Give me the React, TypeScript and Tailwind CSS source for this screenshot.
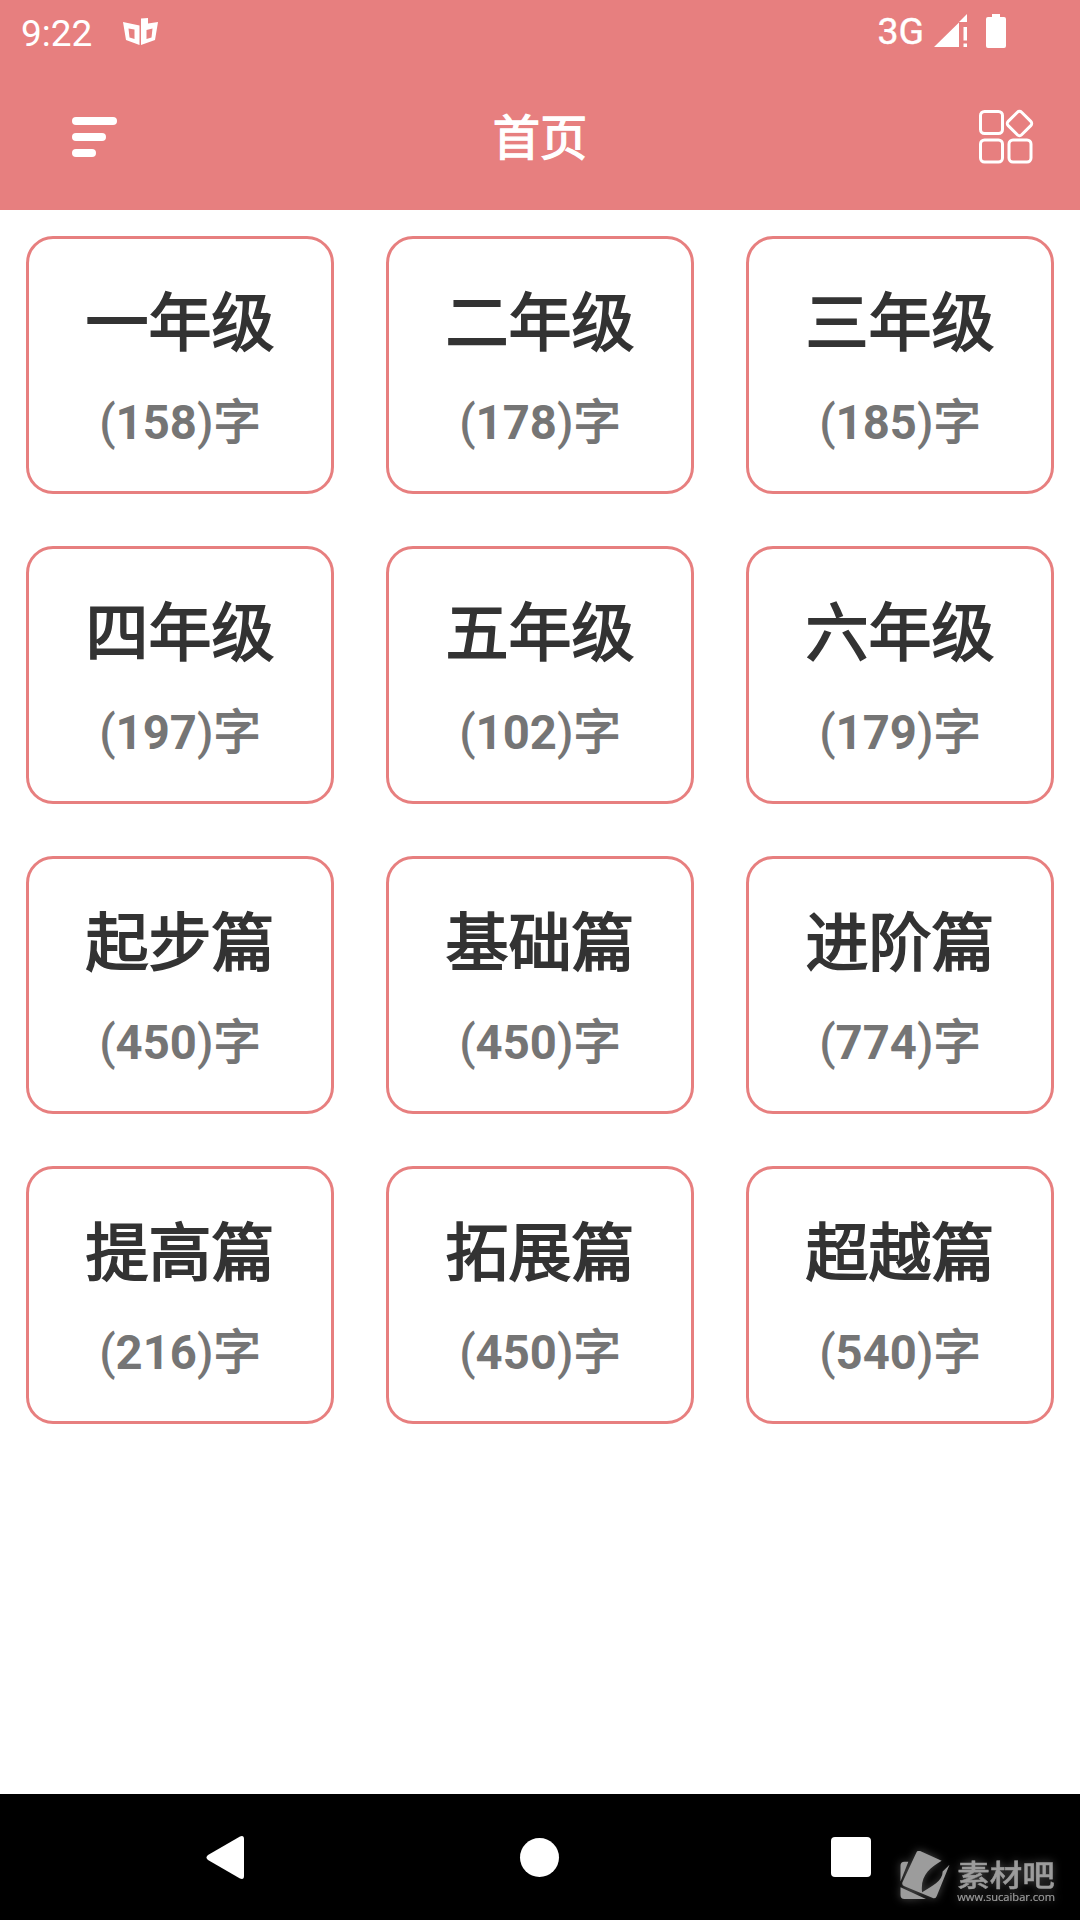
type Level = { title: string; count: number };

const levels: Level[] = [
  { title: "一年级", count: 158 },
  { title: "二年级", count: 178 },
  { title: "三年级", count: 185 },
  { title: "四年级", count: 197 },
  { title: "五年级", count: 102 },
  { title: "六年级", count: 179 },
  { title: "起步篇", count: 450 },
  { title: "基础篇", count: 450 },
  { title: "进阶篇", count: 774 },
  { title: "提高篇", count: 216 },
  { title: "拓展篇", count: 450 },
  { title: "超越篇", count: 540 },
];

function StatusBar() {
  return (
    <div className="flex h-[63px] items-center pl-[21px] pr-[74px]">
      <span className="w-[102px] pt-1 text-[37px] leading-[63px]">9:22</span>
      <svg className="h-7 w-[35px]" viewBox="0 0 35 28" fill="currentColor" fillRule="evenodd">
        <path d="M0 4 16.500 7.500v19.500L3 22ZM5.500 10.500l1 9 5 1.500v-9.500Z" />
        <path d="M18 .5 25 0v5.500l10-1.500-3 18-14 5ZM23.500 12v9l5-1.500 1-9Z" />
      </svg>
      <span className="ml-auto text-[37.500px] leading-[63px] [-webkit-text-stroke:0.4px]">3G</span>
      <svg className="mb-0.5 ml-2.5 h-[34px] w-[34px]" viewBox="0 0 34 34" fill="currentColor">
        <path d="M0 33 25 8.500V33ZM33 0v8h-8ZM29.500 13h3.500v13.500h-3.500ZM29.500 29.500h3.500V33h-3.500Z" />
      </svg>
      <svg className="mb-0.5 ml-[18px] h-[34px] w-5" viewBox="0 0 20 34" fill="currentColor">
        <path d="M6 0h8v3h4a2 2 0 0 1 2 2v27a2 2 0 0 1-2 2H2a2 2 0 0 1-2-2V5a2 2 0 0 1 2-2h4Z" />
      </svg>
    </div>
  );
}

function Toolbar() {
  return (
    <div className="grid h-[147px] grid-cols-[1fr_auto_1fr] items-center px-[72px]">
      <div className="flex flex-col gap-2 pt-px">
        <div className="h-2 w-[45px] rounded-full bg-white" />
        <div className="h-2 w-[34px] rounded-full bg-white" />
        <div className="h-2 w-6 rounded-full bg-white" />
      </div>
      <h1 className="pt-1 text-[47.250px] font-normal leading-[56px] [-webkit-text-stroke:1.3px]">首页</h1>
      <svg className="-mr-[26px] h-[55px] w-[55px] justify-self-end" viewBox="0 0 55 55" fill="none" stroke="currentColor" strokeWidth="3">
        <rect x="1.500" y="2.500" width="22" height="22" rx="4" />
        <rect x="1.500" y="31" width="22" height="22" rx="4" />
        <rect x="30" y="31" width="22" height="22" rx="4" />
        <rect x="31" y="5" width="19" height="19" rx="3" transform="rotate(45 40.500 14.500)" />
      </svg>
    </div>
  );
}

function LevelCard({ level }: { level: Level }) {
  return (
    <div className="flex h-[258px] flex-col items-center rounded-[27px] border-[3px] border-[#e77f7f] pt-12">
      <p className="text-[63px] leading-[74px] text-[#333333] [-webkit-text-stroke:1.8px]">{level.title}</p>
      <p className="mt-[34px] text-[47.250px] font-medium leading-[56px] text-[#757575]">
        (<span className="font-bold">{level.count}</span>)
        <span className="font-normal [-webkit-text-stroke:1.3px]">字</span>
      </p>
    </div>
  );
}

function Watermark() {
  return (
    <div className="absolute right-[25px] top-[57px] flex text-[#9c9c9c] drop-shadow-[0_0_4px_rgba(255,255,255,0.3)]">
      <svg className="h-[49px] w-[51px]" viewBox="0 0 51 50" fill="currentColor">
        <path d="M0 15q0-4 4-4h4L0 31ZM0 37l26 12H4q-4 0-4-4Z" />
        <path d="M16 2q1-3 4-2l22 10C30 17 20 25 22 42 32 36 43 31 43 21l7-7-13 32q-1 3-4 2L4 36q-3-1-2-4Z" />
      </svg>
      <div className="ml-[6px] mt-[9px]">
        <p className="origin-bottom scale-y-90 text-[32.500px] font-medium leading-[31px] [-webkit-text-stroke:0.5px]">素材吧</p>
        <p className="font-['Open_Sans'] text-[11.100px] leading-[11px] [-webkit-text-stroke:0.2px]">www.sucaibar.com</p>
      </div>
    </div>
  );
}

function NavigationBar() {
  return (
    <nav className="relative flex h-[126px] items-center justify-between bg-black pl-[206px] pr-[209px] text-white">
      <svg className="h-[43px] w-[42px]" viewBox="0 0 42 43" fill="currentColor">
        <path d="M34 .5q4-1.500 4 2.500v37q0 4-4 2.500L2 24q-3-2.500 0-5Z" />
      </svg>
      <div className="size-[39px] rounded-full bg-white" />
      <div className="size-10 rounded-[4px] bg-white" />
      <Watermark />
    </nav>
  );
}

export default function App() {
  return (
    <div className="flex h-[1920px] w-[1080px] flex-col bg-white font-[Roboto,'Noto_Sans_CJK_SC',sans-serif]">
      <header className="h-[210px] bg-[#e77f7f] text-white">
        <StatusBar />
        <Toolbar />
      </header>
      <main className="grid flex-1 grid-cols-3 content-start gap-[52px] px-[26px] pt-[26px]">
        {levels.map((level) => (
          <LevelCard key={level.title} level={level} />
        ))}
      </main>
      <NavigationBar />
    </div>
  );
}
